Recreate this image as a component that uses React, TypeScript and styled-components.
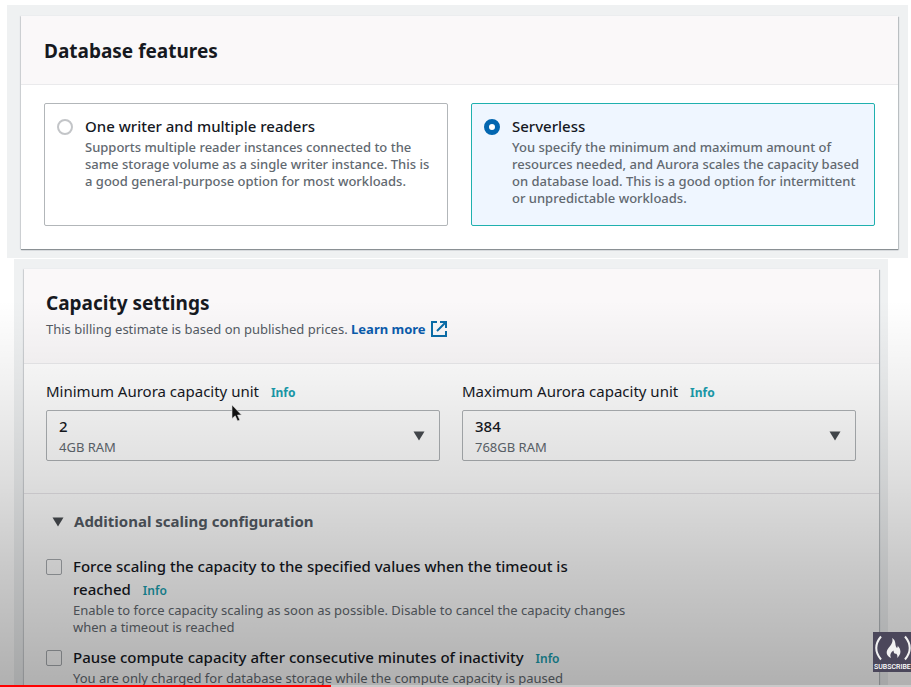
import React, { useState } from "react";
import styled, { createGlobalStyle } from "styled-components";

const GlobalStyle = createGlobalStyle`
  *, *::before, *::after { box-sizing: border-box; }
  body {
    margin: 0;
    background: #ffffff;
    color: #16191f;
    font-family: "Noto Sans", "Open Sans", sans-serif;
    font-size: 15px;
    line-height: 23px;
  }
  button, select, input { font: inherit; color: inherit; margin: 0; }
`;

const Player = styled.div`
  position: relative;
  height: 100vh;
  overflow: hidden;
  padding-top: 5px;
`;

const Backdrop = styled.section<{ $inset?: boolean }>`
  background: #eff1f2;
  margin: ${(p) => (p.$inset ? "1px 23px 0 14px" : "0 3px 0 7px")};
  padding: ${(p) => (p.$inset ? "10px 9px 24px 10px" : "11px 10px 9px 14px")};
`;

const Card = styled.div`
  background: #ffffff;
  box-shadow: 0 1px 1px #8a9094, 1px 1px 1px #c4c9cc, -1px 0 1px #dadddf;
`;

const CardHeader = styled.header<{ $tall?: boolean }>`
  background: #faf8f9;
  border-bottom: 1px solid #eaeaec;
  padding: ${(p) => (p.$tall ? "20px 22px 22px" : "21px 23px 19px")};
`;

const Title = styled.h2`
  margin: 0;
  font-size: 19px;
  line-height: 28px;
  font-weight: 700;
`;

const Note = styled.p`
  margin: 1px 0 0;
  font-size: 13px;
  line-height: 23px;
  color: #545b64;
`;

const LearnMore = styled.a`
  color: #0a5cad;
  font-weight: 700;
  text-decoration: none;
  svg { margin-left: 5px; vertical-align: -3px; }
`;

const TileRow = styled.div`
  display: grid;
  grid-template-columns: 1fr 1fr;
  gap: 23px;
  padding: 18px 23px 23px;
`;

const Tile = styled.label<{ $selected: boolean }>`
  display: flex;
  gap: 12px;
  min-height: 123px;
  padding: 11px 14px 14px 12px;
  border: 1px solid ${(p) => (p.$selected ? "#1fb0ae" : "#b2b6b9")};
  border-radius: 2px;
  background: ${(p) => (p.$selected ? "#eff6ff" : "#ffffff")};
  font-weight: 500;
`;

const Radio = styled.input`
  appearance: none;
  flex: none;
  width: 16px;
  height: 16px;
  margin-top: 4px;
  border: 2px solid #c3c5c8;
  border-radius: 50%;
  background: #ffffff;
  &:checked { border: 5px solid #0366b0; }
`;

const OptionText = styled.span`
  display: block;
`;

const OptionName = styled.span`
  display: block;
  margin-bottom: 1px;
`;

const Hint = styled.span`
  display: block;
  font-size: 13px;
  line-height: 17px;
  color: #626970;
`;

const FieldRow = styled.div`
  display: grid;
  grid-template-columns: 1fr 1fr;
  gap: 22px;
  padding: 16px 23px 32px 22px;
`;

const Field = styled.div`
  display: flex;
  flex-direction: column;
  gap: 6px;
`;

const Info = styled.a<{ $light?: boolean }>`
  margin-left: 8px;
  font-size: 12px;
  font-weight: ${(p) => (p.$light ? 600 : 700)};
  color: #1a9fb0;
  text-decoration: none;
`;

const KeepTogether = styled.span`
  white-space: nowrap;
`;

const SelectBox = styled.div`
  display: grid;
  align-items: center;
  border: 1px solid #aeb2b5;
  border-radius: 2px;
  > * { grid-area: 1 / 1; }
  svg { justify-self: end; margin-right: 14px; pointer-events: none; }
`;

const Select = styled.select`
  appearance: none;
  width: 100%;
  padding: 4px 12px 22px;
  border: 0;
  background: transparent;
  font-weight: 500;
  line-height: 23px;
`;

const SelectDetail = styled.span`
  align-self: end;
  padding: 0 12px 4px;
  font-size: 13px;
  line-height: 17px;
  color: #626970;
  pointer-events: none;
`;

const Scaling = styled.div`
  border-top: 1px solid #e8e6ea;
  padding: 16px 23px 24px 22px;
`;

const Disclosure = styled.button`
  display: flex;
  align-items: center;
  gap: 10px;
  padding: 0 0 0 6px;
  border: 0;
  background: none;
  color: #545b64;
  font-weight: 700;
`;

const CheckList = styled.div`
  display: grid;
  gap: 10px;
  max-width: 590px;
  padding-top: 22px;
`;

const CheckRow = styled.div`
  display: flex;
  gap: 11px;
`;

const Checkbox = styled.input`
  appearance: none;
  flex: none;
  width: 16px;
  height: 16px;
  margin-top: 4px;
  border: 1px solid #a8acb0;
  border-radius: 2px;
  &:checked { background: #0366b0; }
`;

const CheckName = styled.label`
  font-weight: 500;
`;

const Shade = styled.div`
  position: absolute;
  inset: 300px 0 0;
  pointer-events: none;
  background: linear-gradient(
    rgba(0, 0, 0, 0) 0%,
    rgba(0, 0, 0, 0.05) 20%,
    rgba(0, 0, 0, 0.13) 46%,
    rgba(0, 0, 0, 0.21) 69%,
    rgba(0, 0, 0, 0.31) 100%
  );
`;

const Pointer = styled.svg`
  position: absolute;
  left: 231px;
  top: 404px;
  pointer-events: none;
`;

const Subscribe = styled.button`
  position: absolute;
  right: 0;
  bottom: 15px;
  width: 38px;
  height: 40px;
  padding: 0 0 0 1px;
  border: 0;
  background: #4b475b;
  color: #ffffff;
  font-family: Roboto, sans-serif;
  font-size: 7px;
  line-height: 10px;
  font-weight: 500;
  text-align: left;
  white-space: nowrap;
  svg { display: block; }
`;

const Track = styled.progress`
  position: absolute;
  left: 0;
  bottom: 0;
  width: 100%;
  height: 2px;
  appearance: none;
  border: 0;
  &::-webkit-progress-bar { background: #c9c9c9; }
  &::-webkit-progress-value { background: #ff0000; }
`;

const Caret = () => (
  <svg width="12" height="10" viewBox="0 0 12 10" aria-hidden="true">
    <path d="M0.5 0.5H11.5L6 9.5Z" fill="#484c51" />
  </svg>
);

const ExternalIcon = () => (
  <svg width="16" height="16" viewBox="0 0 16 16" fill="none" stroke="#0b6da8" strokeWidth="2" aria-hidden="true">
    <path d="M6 1H1V15H15V10" />
    <path d="M9 1H15V7M14.500 1.500L6 10" />
  </svg>
);

const features = [
  {
    id: "provisioned",
    name: "One writer and multiple readers",
    hint: "Supports multiple reader instances connected to the same storage volume as a single writer instance. This is a good general-purpose option for most workloads.",
  },
  {
    id: "serverless",
    name: "Serverless",
    hint: "You specify the minimum and maximum amount of resources needed, and Aurora scales the capacity based on database load. This is a good option for intermittent or unpredictable workloads.",
  },
];

const capacities = [
  { id: "min", label: "Minimum Aurora capacity unit", value: "2", detail: "4GB RAM" },
  { id: "max", label: "Maximum Aurora capacity unit", value: "384", detail: "768GB RAM" },
];

const scalingOptions = [
  {
    id: "force",
    label: "Force scaling the capacity to the specified values when the timeout is",
    lastWord: "reached",
    hint: "Enable to force capacity scaling as soon as possible. Disable to cancel the capacity changes when a timeout is reached",
  },
  {
    id: "pause",
    label: "Pause compute capacity after consecutive minutes of",
    lastWord: "inactivity",
    hint: "You are only charged for database storage while the compute capacity is paused",
  },
];

export default function App() {
  const [feature, setFeature] = useState("serverless");
  const [open, setOpen] = useState(true);

  return (
    <Player>
      <GlobalStyle />
      <Backdrop>
        <Card>
          <CardHeader>
            <Title>Database features</Title>
          </CardHeader>
          <TileRow role="radiogroup" aria-label="Database features">
            {features.map((f) => (
              <Tile key={f.id} $selected={feature === f.id}>
                <Radio type="radio" name="feature" checked={feature === f.id} onChange={() => setFeature(f.id)} />
                <OptionText>
                  <OptionName>{f.name}</OptionName>
                  <Hint>{f.hint}</Hint>
                </OptionText>
              </Tile>
            ))}
          </TileRow>
        </Card>
      </Backdrop>

      <Backdrop $inset>
        <Card>
          <CardHeader $tall>
            <Title>Capacity settings</Title>
            <Note>
              This billing estimate is based on published prices.{" "}
              <LearnMore href="#pricing">
                Learn more
                <ExternalIcon />
              </LearnMore>
            </Note>
          </CardHeader>
          <FieldRow>
            {capacities.map((c) => (
              <Field key={c.id}>
                <div>
                  <label htmlFor={c.id}>{c.label}</label> <Info href="#info">Info</Info>
                </div>
                <SelectBox>
                  <Select id={c.id} defaultValue={c.value}>
                    <option value={c.value}>{c.value}</option>
                  </Select>
                  <SelectDetail>{c.detail}</SelectDetail>
                  <Caret />
                </SelectBox>
              </Field>
            ))}
          </FieldRow>
          <Scaling>
            <Disclosure type="button" aria-expanded={open} onClick={() => setOpen(!open)}>
              <Caret />
              Additional scaling configuration
            </Disclosure>
            {open && (
              <CheckList>
                {scalingOptions.map((o) => (
                  <CheckRow key={o.id}>
                    <Checkbox type="checkbox" id={o.id} />
                    <OptionText>
                      <CheckName htmlFor={o.id}>{o.label} </CheckName>
                      <KeepTogether>
                        <CheckName htmlFor={o.id}>{o.lastWord}</CheckName>{" "}
                        <Info $light href="#info">Info</Info>
                      </KeepTogether>
                      <Hint>{o.hint}</Hint>
                    </OptionText>
                  </CheckRow>
                ))}
              </CheckList>
            )}
          </Scaling>
        </Card>
      </Backdrop>

      <Shade />
      <Pointer width="12" height="19" viewBox="0 0 12 19" aria-hidden="true">
        <path d="M1 1V14.5L4.2 11.8L6.6 17L8.8 16L6.5 11H10.5Z" fill="#111111" stroke="#dddddd" strokeWidth="0.6" />
      </Pointer>
      <Subscribe type="button">
        <svg width="37" height="29" viewBox="0 0 37 29" aria-hidden="true">
          <path d="M7 3.500Q-2.500 15 7 26.500M31 3.500Q40.500 15 31 26.500" fill="none" stroke="#f2f2f2" strokeWidth="2" />
          <path
            d="M18 5C22.500 7.500 20.500 11 22.500 14.500C23.500 15.500 24 14 23.500 12.500C27 16 28 21 23 25C24 22.500 23 21.500 22 20.500C21 21.500 19.500 20 19.500 17.500C16.500 19.500 15.500 22 17 25C11.500 22.500 12 18 14.500 15C17.500 11.500 19.500 8.500 18 5Z"
            fill="#f2f2f2"
          />
        </svg>
        SUBSCRIBE
      </Subscribe>
      <Track max={911} value={331} aria-label="Playback position" />
    </Player>
  );
}
